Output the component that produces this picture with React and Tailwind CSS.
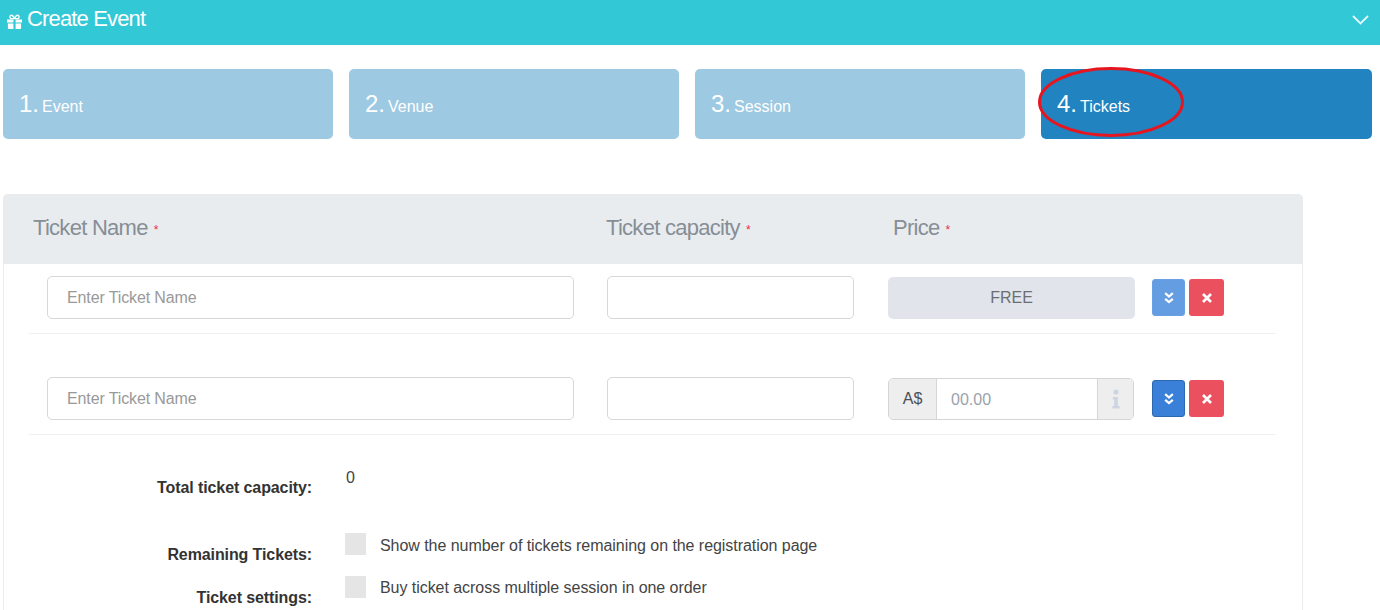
import React from "react";

const Gift = () => (
  <svg width="17" height="16" viewBox="0 0 16 16" fill="#fff" className="mt-[9px] shrink-0">
    <path d="M0.5 5.5h6.4v3H0.5zM9.1 5.5h6.4v3H9.100zM1.400 9.400h5.500v5.600H2.400a1 1 0 0 1-1-1zM9.100 9.400h5.500V14a1 1 0 0 1-1 1H9.100z" />
    <path d="M8 4.600C7 2 5.600 1 4.400 1.300 3 1.700 3 3.800 4.400 4.600zM8 4.600C9 2 10.400 1 11.600 1.300 13 1.700 13 3.800 11.600 4.600z" fill="none" stroke="#fff" strokeWidth="1.300" />
  </svg>
);

const Step = ({ n, label, active, className, children }) => (
  <div className={`relative flex h-[70px] items-center rounded-[5px] pl-[16px] text-white ${active ? "bg-[#2183bf]" : "bg-[#9ec9e2]"} ${className}`}>
    <span className="text-[24px] leading-none">{n}.</span>
    <span className="ml-[3px] mt-[6px] text-[16px] leading-none">{label}</span>
    {children}
  </div>
);

const Req = () => <span className="ml-[6px] align-[1px] text-[12px] text-[#e8303c]">*</span>;

const ActionButtons = ({ dark, className }) => (
  <div className={`flex gap-[4px] ${className}`}>
    <button className={`flex h-[37px] w-[33px] items-center justify-center rounded-[3px] border ${dark ? "border-[#2c69b0] bg-[#3b80d8]" : "border-[#6ba0e2] bg-[#659de2]"}`}>
      <svg width="10" height="12" viewBox="0 0 10 12" fill="none" stroke="#fff" strokeWidth="2.200">
        <path d="M1.200 1.200 5 4.500l3.800-3.300M1.200 6.800 5 10.100l3.800-3.300" />
      </svg>
    </button>
    <button className="flex h-[37px] w-[35px] items-center justify-center rounded-[3px] bg-[#ea505e]">
      <svg width="10" height="10" viewBox="0 0 10 10" fill="none" stroke="#fff" strokeWidth="2.600">
        <path d="M1 1l8 8M9 1 1 9" />
      </svg>
    </button>
  </div>
);

const TextBox = ({ className, placeholder }) => (
  <div className={`flex h-[43px] items-center rounded-[5px] border border-[#d5d7d9] bg-white pl-[19px] text-[16px] tracking-[-0.12px] text-[#999] ${className}`}>
    {placeholder}
  </div>
);

const Row = ({ children, className }) => (
  <div className={`ml-[25px] flex w-[1247px] border-b border-[#eef0f1] pl-[18px] ${className}`}>{children}</div>
);

const SettingLabel = ({ children, className }) => (
  <div className={`w-[308px] text-right text-[16px] font-bold leading-[20px] tracking-[-0.1px] text-[#333] ${className}`}>{children}</div>
);

export default function App() {
  return (
    <div className="h-[610px] w-[1380px] overflow-hidden bg-white font-['Liberation_Sans',Arial,sans-serif]">
      <header className="flex h-[45px] items-start justify-between bg-[#32c8d6] pl-[6px] pr-[11px] pt-[5px] text-white">
        <div className="flex items-start gap-[4px]">
          <Gift />
          <span className="text-[22px] leading-[28px] tracking-[-0.85px]">Create Event</span>
        </div>
        <svg width="17" height="10" viewBox="0 0 17 10" fill="none" stroke="#e6f8fa" strokeWidth="1.800" className="mt-[10px]">
          <path d="M1 1l7.500 7.500L16 1" />
        </svg>
      </header>

      <div className="ml-[3px] mt-[24px] flex gap-[16px]">
        <Step n="1" label="Event" className="w-[330px]" />
        <Step n="2" label="Venue" className="w-[330px]" />
        <Step n="3" label="Session" className="w-[330px]" />
        <Step n="4" label="Tickets" active className="w-[331px]">
          <svg width="150" height="74" viewBox="0 0 150 74" fill="none" className="absolute left-[-5px] top-[-3px]">
            <ellipse cx="75" cy="36" rx="71.500" ry="33.500" stroke="#e5161f" strokeWidth="3" />
          </svg>
        </Step>
      </div>

      <section className="ml-[3px] mt-[55px] h-[500px] w-[1300px] rounded-t-[5px] border-x border-[#eaecee]">
        <div className="-mx-px flex h-[70px] items-center rounded-t-[5px] bg-[#e9ecef] pb-[3px] text-[22px] tracking-[-0.72px] text-[#868e96]">
          <div className="ml-[30px] w-[573px]">Ticket Name<Req /></div>
          <div className="w-[287px]">Ticket capacity<Req /></div>
          <div>Price<Req /></div>
        </div>

        <Row className="h-[70px] items-start pt-[12px]">
          <TextBox className="w-[527px]" placeholder="Enter Ticket Name" />
          <TextBox className="ml-[33px] w-[247px]" />
          <div className="ml-[34px] mt-[1px] flex h-[42px] w-[247px] items-center justify-center rounded-[5px] bg-[#e1e5eb] text-[16px] text-[#6b6f73]">FREE</div>
          <ActionButtons className="ml-[17px] mt-[3px]" />
        </Row>

        <Row className="mt-[30px] h-[71px] items-start pt-[13px]">
          <TextBox className="w-[527px]" placeholder="Enter Ticket Name" />
          <TextBox className="ml-[33px] w-[247px]" />
          <div className="ml-[34px] mt-[1px] flex h-[42px] w-[246px] overflow-hidden rounded-[5px] border border-[#d3d5d7] text-[16px]">
            <div className="flex w-[48px] items-center justify-center border-r border-[#d3d5d7] bg-[#eeeeee] text-[#495057]">A$</div>
            <div className="flex flex-1 items-center pl-[14px] pt-[2px] text-[#9aa2ad]">00.00</div>
            <div className="flex w-[36px] items-center justify-center border-l border-[#d3d5d7] bg-[#eeeeee]">
              <svg width="8" height="20" viewBox="0 0 8 20" fill="#cdd5e0">
                <circle cx="4" cy="3" r="2.600" />
                <path d="M0.800 8h5v9h1.800v2.500H0.400V17h1.800v-6.500H0.800z" />
              </svg>
            </div>
          </div>
          <ActionButtons dark className="ml-[18px] mt-[3px]" />
        </Row>

        <div className="mt-[33px] flex">
          <SettingLabel className="mt-[10px]">Total ticket capacity:</SettingLabel>
          <div className="ml-[34px] text-[16px] leading-[20px] text-[#444]">0</div>
        </div>

        <div className="mt-[35px] flex h-[43px]">
          <SettingLabel className="mt-[12px]">Remaining Tickets:</SettingLabel>
          <div className="ml-[33px] h-[22px] w-[21px] bg-[#e5e5e5]" />
          <div className="ml-[14px] mt-[2px] text-[16px] leading-[22px] tracking-[-0.05px] text-[#444]">Show the number of tickets remaining on the registration page</div>
        </div>
        <div className="flex">
          <SettingLabel className="mt-[12px]">Ticket settings:</SettingLabel>
          <div className="ml-[33px] h-[22px] w-[21px] bg-[#e5e5e5]" />
          <div className="ml-[14px] mt-[1px] text-[16px] leading-[22px] tracking-[-0.05px] text-[#444]">Buy ticket across multiple session in one order</div>
        </div>
      </section>
    </div>
  );
}
